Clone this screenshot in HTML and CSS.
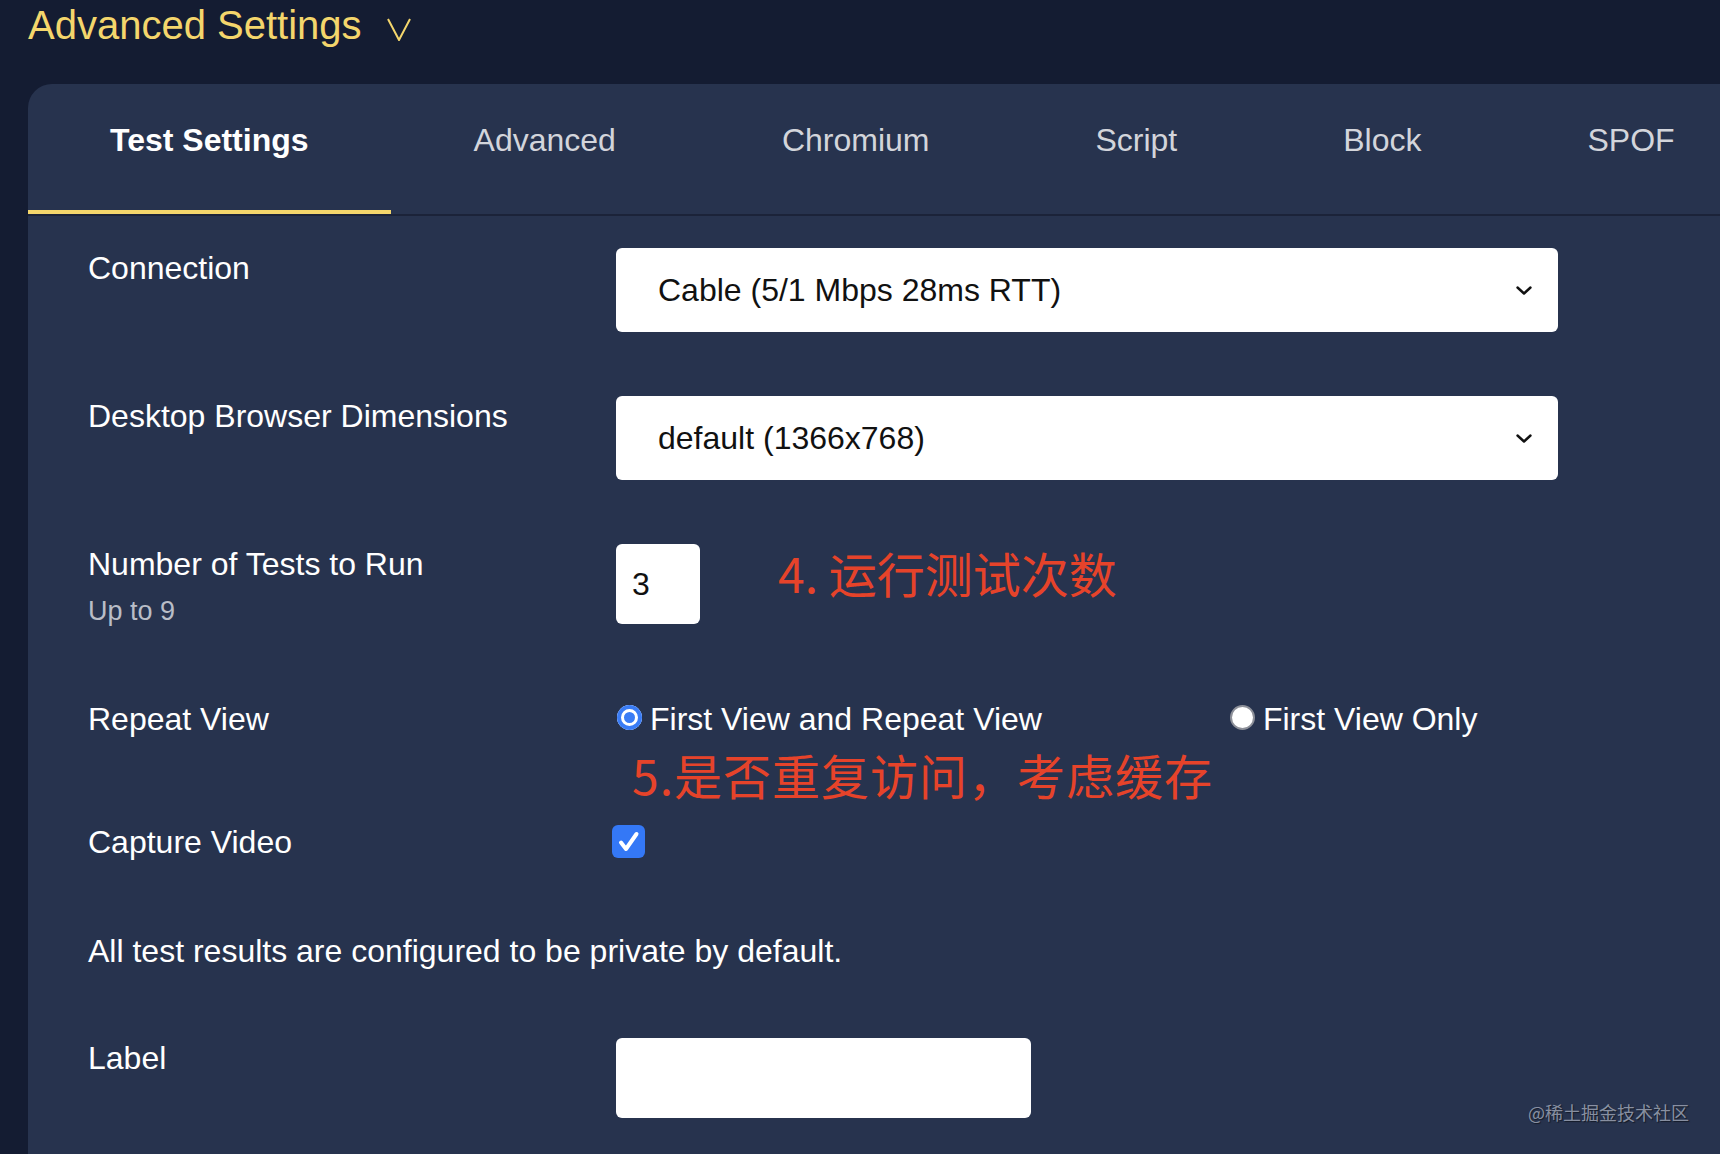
FILE: index.html
```html
<!DOCTYPE html>
<html lang="en">
<head>
<meta charset="utf-8">
<title>Advanced Settings</title>
<link rel="stylesheet" href="styles.css">
</head>
<body>
<div class="page">
  <header class="adv-header">
    <span class="adv-title">Advanced Settings</span>
    <svg class="adv-chevron" viewBox="0 0 24 23" aria-hidden="true"><polyline points="1,1 12,22 23,1" fill="none" stroke="#f4d66c" stroke-width="2"/></svg>
  </header>

  <section class="panel">
    <nav class="tabs">
      <div class="tab active">Test Settings</div>
      <div class="tab">Advanced</div>
      <div class="tab">Chromium</div>
      <div class="tab">Script</div>
      <div class="tab">Block</div>
      <div class="tab">SPOF</div>
    </nav>

    <div class="form">
      <div class="row row-connection">
        <div class="label">Connection</div>
        <div class="control">
          <div class="select"><span>Cable (5/1 Mbps 28ms RTT)</span><svg class="sel-chev" viewBox="0 0 16 9" aria-hidden="true"><polyline points="1.5,1.5 8,7.5 14.5,1.5" fill="none" stroke="#111" stroke-width="2.4" stroke-linecap="round" stroke-linejoin="round"/></svg></div>
        </div>
      </div>

      <div class="row row-dims">
        <div class="label">Desktop Browser Dimensions</div>
        <div class="control">
          <div class="select"><span>default (1366x768)</span><svg class="sel-chev" viewBox="0 0 16 9" aria-hidden="true"><polyline points="1.5,1.5 8,7.5 14.5,1.5" fill="none" stroke="#111" stroke-width="2.4" stroke-linecap="round" stroke-linejoin="round"/></svg></div>
        </div>
      </div>

      <div class="row row-runs">
        <div class="label">
          <div>Number of Tests to Run</div>
          <div class="hint">Up to 9</div>
        </div>
        <div class="control">
          <div class="numbox">3</div>
          <div class="anno anno-4">4. 运行测试次数</div>
        </div>
      </div>

      <div class="row row-repeat">
        <div class="label label-flat">Repeat View</div>
        <div class="control">
          <div class="radios">
            <div class="opt"><span class="radio radio-on"></span><span>First View and Repeat View</span></div>
            <div class="opt"><span class="radio radio-off"></span><span>First View Only</span></div>
          </div>
          <div class="anno anno-5">5.是否重复访问，考虑缓存</div>
        </div>
      </div>

      <div class="row row-video">
        <div class="label label-flat">Capture Video</div>
        <div class="control">
          <span class="checkbox"><svg viewBox="0 0 33 33" aria-hidden="true"><polyline points="9,17.5 14,24 24.5,9" fill="none" stroke="#fff" stroke-width="4" stroke-linecap="round" stroke-linejoin="round"/></svg></span>
        </div>
      </div>

      <p class="note">All test results are configured to be private by default.</p>

      <div class="row row-label">
        <div class="label">Label</div>
        <div class="control">
          <div class="textbox"></div>
        </div>
      </div>
    </div>
  </section>

  <div class="watermark">@稀土掘金技术社区</div>
</div>
</body>
</html>
```

FILE: styles.css
```css
html, body {
  margin: 0;
  padding: 0;
}

body {
  background: #141c32;
  font-family: "Liberation Sans", Arial, "Noto Sans CJK SC", sans-serif;
  height: 1154px;
  overflow: hidden;
}

.page {
  position: relative;
  height: 1154px;
}

/* header */
.adv-header {
  display: flex;
  align-items: flex-start;
  gap: 25px;
  padding: 2px 0 0 28px;
  height: 46px;
}

.adv-title {
  font-size: 40px;
  line-height: 46px;
  color: #f4d66c;
}

.adv-chevron {
  width: 24px;
  height: 23px;
  margin-top: 16px;
}

/* panel */
.panel {
  margin: 36px 0 0 28px;
  background: #27334e;
  border-top-left-radius: 24px;
  min-height: 1080px;
  overflow: hidden;
}

.tabs {
  display: flex;
  border-bottom: 2px solid #1b2339;
}

.tab {
  flex: none;
  padding: 38px 83px 51px;
  font-size: 32px;
  line-height: 37px;
  color: #d3d5db;
  border-bottom: 4px solid transparent;
  white-space: nowrap;
}

.tab.active {
  padding-left: 82px;
  padding-right: 82px;
  font-weight: bold;
  color: #ffffff;
  border-bottom-color: #f4d66c;
}

/* form */
.form {
  padding: 32px 0 0 60px;
}

.row {
  display: grid;
  grid-template-columns: 528px 942px;
  align-items: start;
}

.row-dims,
.row-runs {
  margin-top: 64px;
}

.row-repeat {
  margin-top: 74px;
}

.row-video {
  margin-top: 86px;
}

.row-label {
  margin-top: 68px;
}

.label {
  font-size: 32px;
  line-height: 37px;
  color: #ffffff;
  padding-top: 2px;
}

.label-flat {
  padding-top: 0;
}

.hint {
  font-size: 27px;
  line-height: 31px;
  color: #b9bdc7;
  margin-top: 13px;
}

.control {
  position: relative;
}

.select {
  box-sizing: border-box;
  height: 84px;
  background: #ffffff;
  border-radius: 6px;
  display: flex;
  align-items: center;
  justify-content: space-between;
  padding: 0 26px 0 42px;
  font-size: 32px;
  line-height: 37px;
  color: #111111;
}

.sel-chev {
  width: 16px;
  height: 9px;
}

.numbox {
  box-sizing: border-box;
  width: 84px;
  height: 80px;
  background: #ffffff;
  border-radius: 6px;
  display: flex;
  align-items: center;
  padding-left: 16px;
  font-size: 32px;
  color: #111111;
}

.radios {
  display: flex;
  align-items: center;
  gap: 188px;
  height: 37px;
  font-size: 32px;
  line-height: 37px;
  color: #ffffff;
  margin-left: 1px;
}

.opt {
  display: flex;
  align-items: center;
  gap: 8px;
  white-space: nowrap;
}

.radio {
  box-sizing: border-box;
  width: 25px;
  height: 25px;
  border-radius: 50%;
  margin-bottom: 4px;
  flex: none;
}

.radio-on {
  background: #3a7cf5;
  box-shadow: inset 0 0 0 4px #3a7cf5, inset 0 0 0 7px #ffffff;
}

.radio-off {
  background: #ffffff;
  border: 2px solid #8d9099;
}

.checkbox {
  display: block;
  width: 33px;
  height: 33px;
  margin: 1px 0 0 -4px;
  background: #3478f6;
  border-radius: 6px;
}

.checkbox svg {
  display: block;
  width: 33px;
  height: 33px;
}

.note {
  margin: 72px 0 0;
  font-size: 32px;
  line-height: 37px;
  color: #ffffff;
}

.textbox {
  width: 415px;
  height: 80px;
  background: #ffffff;
  border-radius: 6px;
}

/* annotation overlays */
.anno {
  position: absolute;
  font-family: "Noto Sans CJK SC", sans-serif;
  font-size: 48px;
  line-height: 48px;
  color: #e6432a;
  white-space: nowrap;
}

.anno-4 {
  left: 162px;
  top: 4px;
}

.anno-5 {
  left: 16px;
  top: 49px;
  letter-spacing: 1px;
}

.watermark {
  position: absolute;
  left: 1528px;
  top: 1103px;
  font-family: "Noto Sans CJK SC", sans-serif;
  font-size: 18px;
  line-height: 18px;
  color: rgba(165, 172, 188, 0.8);
  text-shadow: 1px 1px 1px rgba(0, 0, 0, 0.5);
  white-space: nowrap;
}
```
